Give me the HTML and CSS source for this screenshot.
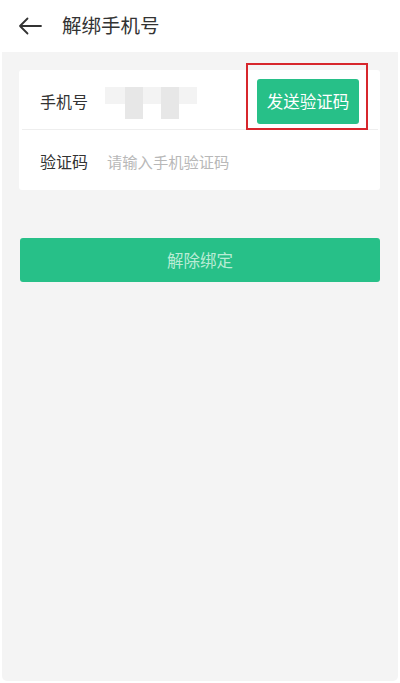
FILE: index.html
```html
<!DOCTYPE html>
<html lang="zh">
<head>
<meta charset="utf-8">
<title>解绑手机号</title>
<link rel="stylesheet" href="styles.css">
</head>
<body>
<div class="app">
  <header class="topbar">
    <svg class="back" width="24" height="18" viewBox="0 0 24 18" aria-hidden="true">
      <path d="M23 9H2 M9.5 1.5L2 9l7.5 7.5" fill="none" stroke="#333" stroke-width="1.8" stroke-linecap="round" stroke-linejoin="round"/>
    </svg>
    <h1 class="title">解绑手机号</h1>
  </header>
  <main class="content">
    <section class="card">
      <div class="row row-phone">
        <span class="label">手机号</span>
        <div class="masked">
          <span class="band"></span>
          <span class="blk blk1"></span>
          <span class="blk blk2"></span>
        </div>
        <div class="send-wrap">
          <button class="send">发送验证码</button>
        </div>
      </div>
      <div class="row row-code">
        <span class="label">验证码</span>
        <span class="placeholder">请输入手机验证码</span>
      </div>
    </section>
    <button class="unbind">解除绑定</button>
  </main>
</div>
</body>
</html>
```

FILE: styles.css
```css
* { box-sizing: border-box; }
html, body {
  margin: 0;
  padding: 0;
  background: #ffffff;
}
body {
  font-family: "Noto Sans CJK SC", "Noto Sans", sans-serif;
  color: #333;
}
.app {
  width: 400px;
  height: 683px;
  display: flex;
  flex-direction: column;
}
.topbar {
  height: 52px;
  background: #fff;
  display: flex;
  align-items: center;
  padding-left: 18px;
  flex-shrink: 0;
}
.back {
  display: block;
  margin-top: -1px;
}
.title {
  margin: -2px 0 0 20px;
  font-size: 19.5px;
  font-weight: 400;
  color: #333;
  line-height: 1;
}
.content {
  flex: 1;
  background: #f4f4f4;
  margin: 0 2px 2px;
  border-radius: 0 0 5px 5px;
  padding: 18px 18px 0 17px;
}
.card {
  background: #fff;
  border-radius: 3px;
  padding: 0 2px 0 3px;
}
.row {
  height: 60px;
  display: flex;
  align-items: center;
  padding-left: 18px;
}
.row-phone {
  border-bottom: 1px solid #eeeeee;
}
.label {
  font-size: 16px;
  color: #333;
  width: 67px;
  flex-shrink: 0;
  margin-top: 2px;
}
.masked {
  position: relative;
  width: 92px;
  height: 32px;
  margin-top: 6px;
  margin-left: -2px;
}
.band {
  position: absolute;
  left: 0;
  top: 0;
  width: 92px;
  height: 17px;
  background: #f3f3f3;
}
.blk {
  position: absolute;
  top: 0;
  width: 18px;
  height: 32px;
  background: #e7e7e7;
}
.blk1 { left: 20px; }
.blk2 { left: 56px; }
.send-wrap {
  margin-left: auto;
  margin-right: 10px;
  border: 2px solid #d7262c;
  width: 122px;
  height: 67px;
  margin-top: -7px;
  display: flex;
  align-items: flex-end;
  padding: 0 7px 4px 9px;
}
.send {
  width: 102px;
  height: 45px;
  background: #27c088;
  color: #fff;
  border: none;
  border-radius: 3px;
  font-family: inherit;
  font-size: 16.5px;
  padding: 0;
  flex-shrink: 0;
}
.placeholder {
  font-size: 15.3px;
  color: #b8b8b8;
  margin-top: 2px;
}
.unbind {
  display: block;
  width: 360px;
  height: 44px;
  margin: 48px 0 0 1px;
  background: #27c088;
  border: none;
  border-radius: 3px;
  color: #b9ecd5;
  font-family: inherit;
  font-size: 16.5px;
  padding: 0;
}
```
